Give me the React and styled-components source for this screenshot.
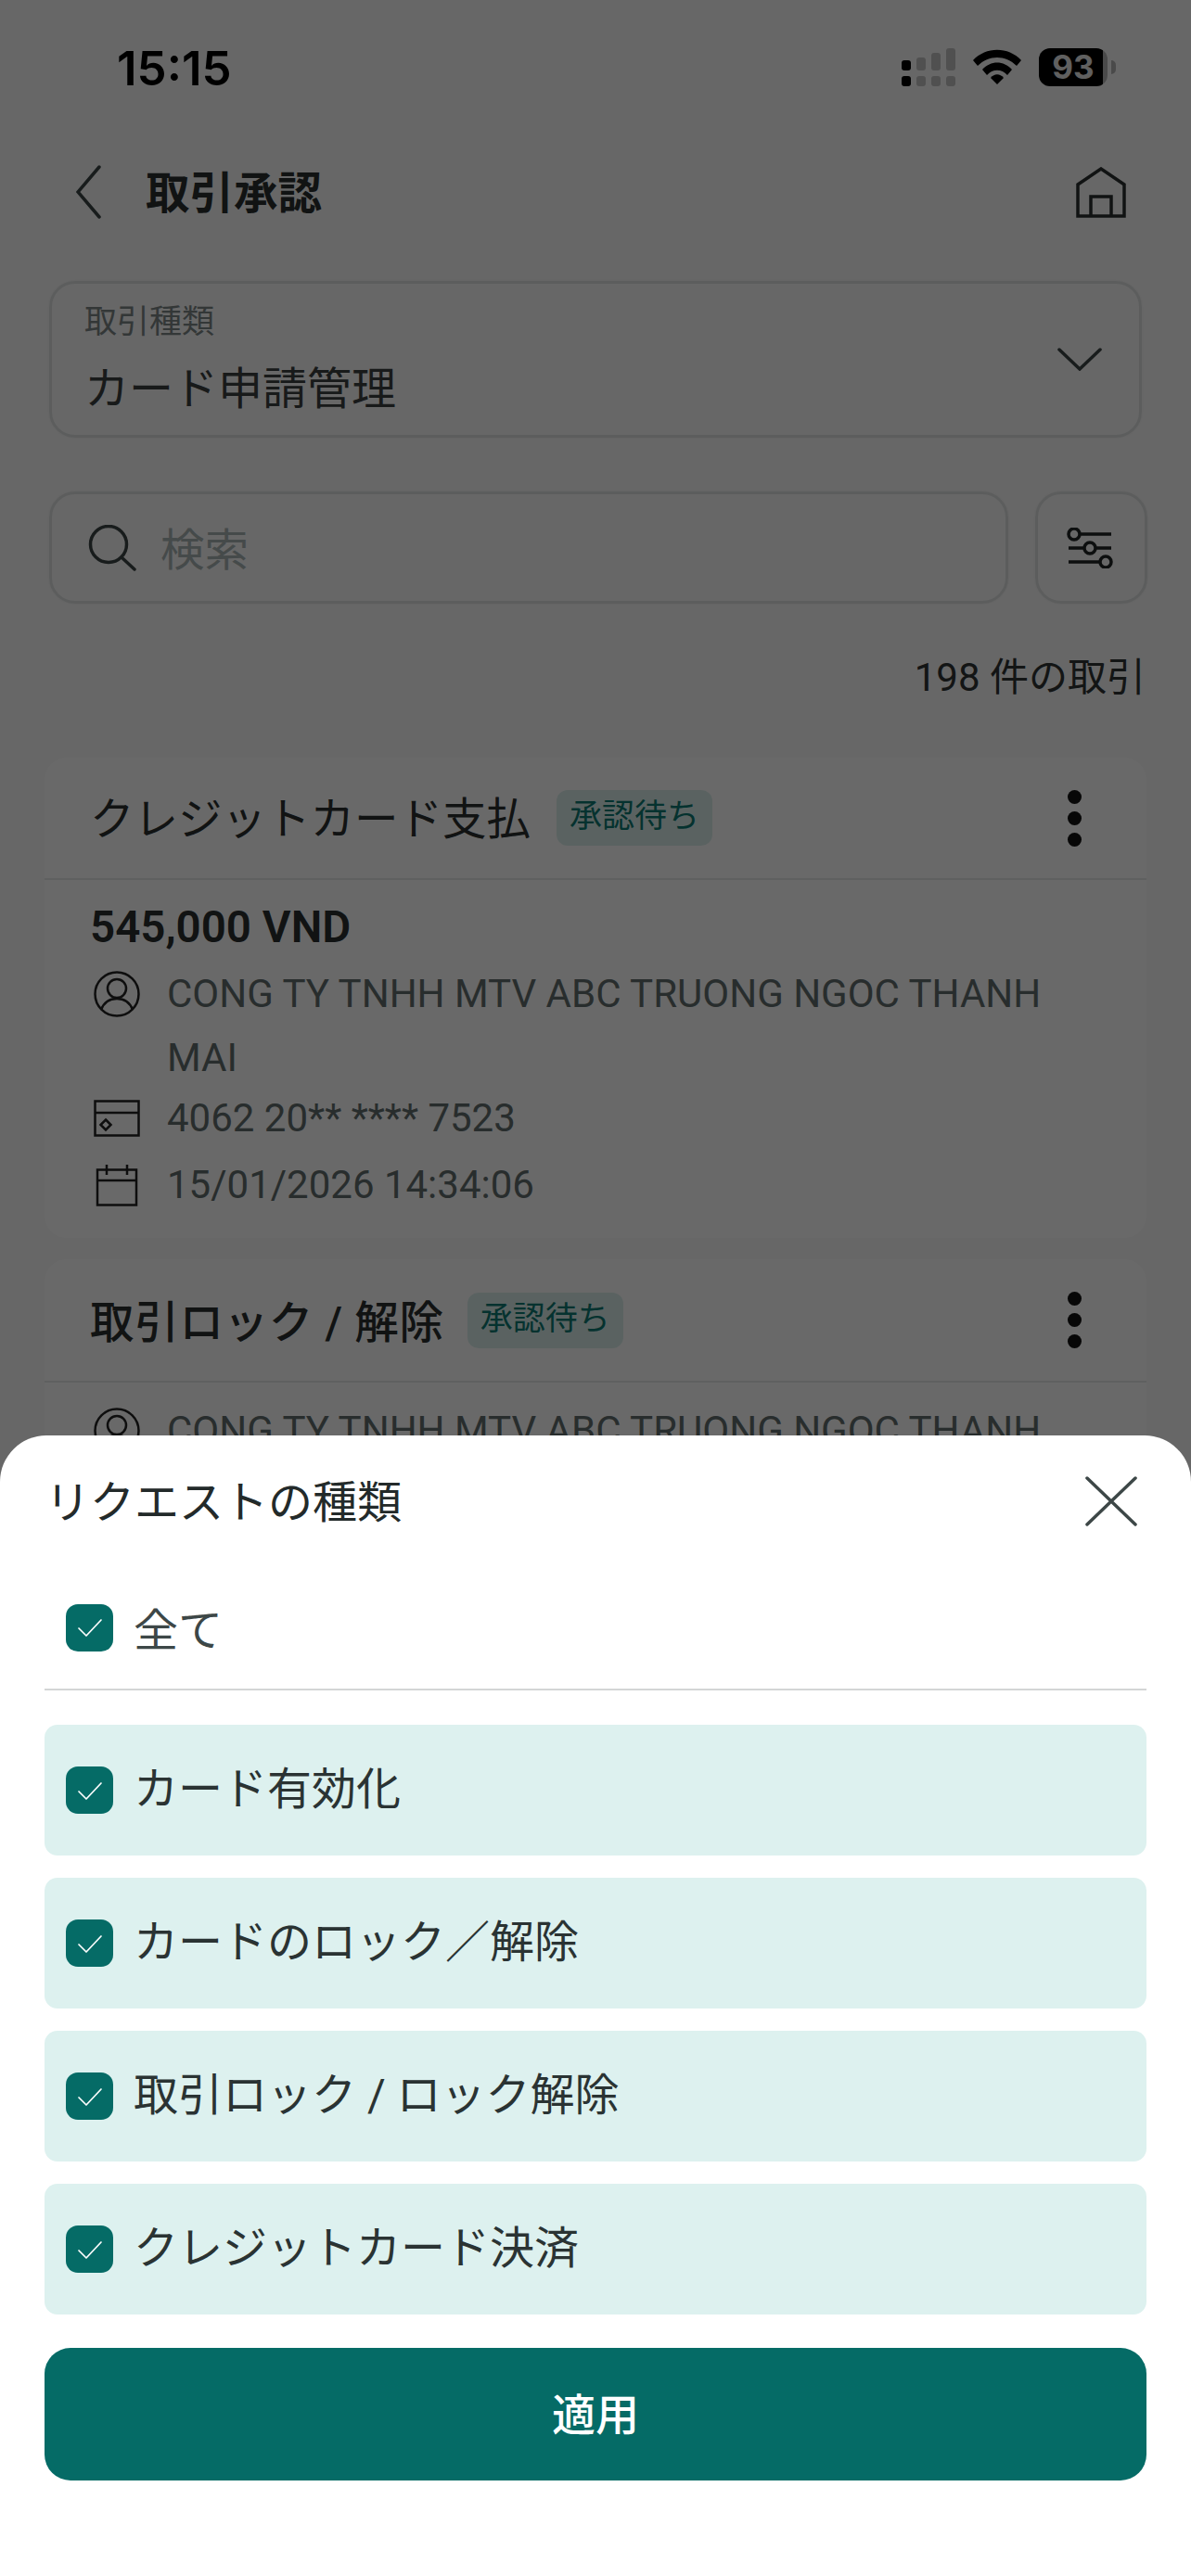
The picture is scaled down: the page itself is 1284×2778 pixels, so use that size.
import React from "react";
import styled, { createGlobalStyle } from "styled-components";

const Global = createGlobalStyle`
  html, body { margin: 0; padding: 0; background: #fff; }
  * { box-sizing: border-box; }
  body { font-family: Roboto, "Noto Sans CJK JP", sans-serif; color: #2a2f2f; }
`;

const Page = styled.div`
  position: relative;
  width: 1284px;
  height: 2778px;
  overflow: hidden;
  background: #fafafa;
`;
const StatusBar = styled.div`
  height: 144px;
  display: flex;
  align-items: center;
  justify-content: space-between;
  padding: 0 90px 0 126px;
`;
const Time = styled.div`
  font-family: Inter, sans-serif;
  font-weight: 600;
  font-size: 51px;
  padding-top: 2px;
  color: #000;
`;
const StatusIcons = styled.div`
  display: flex;
  align-items: center;
  gap: 19px;
`;
const Battery = styled.div`
  position: relative;
  width: 74px;
  height: 41px;
  border-radius: 12px;
  background: linear-gradient(to right, #000 93%, #b5b5b5 93%);
  color: #e8e8e8;
  font-family: Inter, sans-serif;
  font-weight: 700;
  font-size: 35px;
  line-height: 41px;
  text-align: center;
  &::after {
    content: "";
    position: absolute;
    right: -9px;
    top: 13px;
    width: 5px;
    height: 15px;
    border-radius: 0 6px 6px 0;
    background: #b5b5b5;
  }
`;
const Header = styled.div`
  height: 126px;
  display: flex;
  align-items: center;
  padding: 0 70px 0 82px;
`;
const Title = styled.div`
  margin-left: 48px;
  padding-bottom: 6px;
  flex: 1;
  font-size: 47.5px;
  font-weight: 700;
  color: #2a2f2f;
`;
const SelectBox = styled.div`
  margin: 33px 53px 0 53px;
  height: 169px;
  border: 3px solid #e0e3e3;
  border-radius: 28px;
  box-shadow: 0 0 3px rgba(0, 0, 0, 0.06);
  padding: 0 40px 0 35px;
  display: flex;
  align-items: center;
  justify-content: space-between;
`;
const SelectLabel = styled.div`
  font-size: 35px;
  line-height: 48px;
  color: #7d8787;
`;
const SelectValue = styled.div`
  margin-top: 16px;
  font-size: 48px;
  line-height: 64px;
  color: #3a4040;
`;
const SearchRow = styled.div`
  margin-top: 58px;
  padding: 0 47px 0 53px;
  display: flex;
  gap: 29px;
`;
const SearchBox = styled.div`
  flex: 1;
  height: 121px;
  border: 3px solid #e0e3e3;
  border-radius: 28px;
  box-shadow: 0 0 3px rgba(0, 0, 0, 0.06);
  padding-left: 39px;
  display: flex;
  align-items: center;
  gap: 26px;
`;
const Placeholder = styled.div`
  font-size: 47.5px;
  padding-bottom: 3px;
  color: #a9b3b3;
`;
const FilterButton = styled.div`
  width: 121px;
  height: 121px;
  border: 3px solid #e0e3e3;
  border-radius: 28px;
  box-shadow: 0 0 3px rgba(0, 0, 0, 0.06);
  padding-right: 3px;
  display: flex;
  align-items: center;
  justify-content: center;
`;
const Count = styled.div`
  margin-top: 50px;
  padding-right: 49px;
  height: 60px;
  line-height: 60px;
  text-align: right;
  font-size: 42px;
  color: #2e3333;
`;
const CardList = styled.div`
  margin-top: 56px;
  padding: 0 48px;
  display: flex;
  flex-direction: column;
  gap: 23px;
`;
const Card = styled.div`
  background: #fff;
  border-radius: 24px;
`;
const CardHead = styled.div`
  height: ${(p) => p.$height}px;
  border-bottom: 2px solid #e6e9e9;
  padding: 0 70px 0 49px;
  display: flex;
  align-items: center;
`;
const CardTitle = styled.div`
  font-size: 47.5px;
  padding-bottom: ${(p) => (p.$bold ? 3 : 6)}px;
  font-weight: ${(p) => (p.$bold ? 500 : 400)};
  letter-spacing: ${(p) => (p.$bold ? 0.7 : 0)}px;
  color: #2a2f2f;
`;
const Badge = styled.div`
  margin-left: ${(p) => p.$gap}px;
  width: 168px;
  height: 60px;
  border-radius: 12px;
  background: #dbefec;
  color: #0d7a72;
  font-size: 35px;
  line-height: 58px;
  text-align: center;
`;
const Dots = styled.div`
  margin-left: auto;
  display: flex;
  flex-direction: column;
  gap: 8px;
`;
const Dot = styled.span`
  width: 15px;
  height: 15px;
  border-radius: 50%;
  background: #111;
`;
const CardBody = styled.div`
  padding: ${(p) => p.$top}px 80px 26px 49px;
`;
const Amount = styled.div`
  font-size: 47.5px;
  line-height: 52px;
  font-weight: 600;
  color: #2a2f2f;
  margin-bottom: 11px;
`;
const InfoRow = styled.div`
  display: flex;
  align-items: flex-start;
  margin-top: ${(p) => p.$top || 0}px;
  line-height: ${(p) => p.$line}px;
  font-size: 42px;
  color: #626e6e;
`;
const IconSlot = styled.div`
  flex: none;
  width: 83px;
  height: ${(p) => p.$line}px;
  padding-left: 4px;
  display: flex;
  align-items: center;
`;
const Scrim = styled.div`
  position: absolute;
  inset: 0;
  background: rgba(0, 0, 0, 0.59);
`;
const Sheet = styled.div`
  position: absolute;
  left: 0;
  right: 0;
  bottom: 0;
  height: 1230px;
  background: #fff;
  border-radius: 50px 50px 0 0;
  padding: 0 48px;
`;
const SheetHead = styled.div`
  height: 141px;
  display: flex;
  align-items: center;
  justify-content: space-between;
  padding: 0 10px 0 1px;
`;
const SheetTitle = styled.div`
  font-size: 48px;
  padding-bottom: 5px;
  font-weight: 400;
  color: #232a2a;
`;
const AllRow = styled.div`
  height: 134px;
  border-bottom: 2px solid #d4d6d6;
  padding-left: 23px;
  display: flex;
  align-items: center;
  gap: 22px;
  font-size: 48px;
  color: #3d4747;
`;
const Options = styled.div`
  margin-top: 37px;
  display: flex;
  flex-direction: column;
  gap: 24px;
`;
const Option = styled.div`
  height: 141px;
  border-radius: 14px;
  background: #ddf1ef;
  padding-left: 23px;
  display: flex;
  align-items: center;
  gap: 22px;
  font-size: 48px;
  color: #2a3333;
`;
const RowText = styled.span`
  padding-bottom: ${(p) => p.$lift}px;
`;
const Check = styled.div`
  flex: none;
  width: 51px;
  height: 51px;
  border-radius: 13px;
  background: #056b66;
  display: flex;
  align-items: center;
  justify-content: center;
`;
const ApplyButton = styled.div`
  margin-top: 36px;
  height: 143px;
  border-radius: 28px;
  background: #056b66;
  color: #fff;
  font-size: 47px;
  font-weight: 500;
  padding-bottom: 6px;
  display: flex;
  align-items: center;
  justify-content: center;
`;

const SignalIcon = () => (
  <svg width="58" height="41" viewBox="0 0 58 41">
    <rect x="0" y="13" width="10" height="11" rx="3" fill="#000" />
    <rect x="0" y="30" width="10" height="11" rx="3" fill="#000" />
    <g fill="#000" opacity="0.22">
      <rect x="16" y="10" width="10" height="14" rx="3" />
      <rect x="16" y="30" width="10" height="11" rx="3" />
      <rect x="32" y="5" width="10" height="19" rx="3" />
      <rect x="32" y="30" width="10" height="11" rx="3" />
      <rect x="48" y="0" width="10" height="24" rx="3" />
      <rect x="48" y="30" width="10" height="11" rx="3" />
    </g>
  </svg>
);
const WifiIcon = () => (
  <svg width="52" height="38" viewBox="0 0 52 38">
    <path d="M0 12 C14 -3 38 -3 52 12 L47 18 C35 6 17 6 5 18 Z" fill="#000" />
    <path d="M10 22 C19 12 33 12 42 22 L37 28 C31 21 21 21 15 28 Z" fill="#000" />
    <path d="M19 31 C23 26 29 26 33 31 L26 38 Z" fill="#000" />
  </svg>
);
const BackIcon = () => (
  <svg width="27" height="58" viewBox="0 0 27 58" fill="none" stroke="#3c4646" strokeWidth="3.5" strokeLinecap="round">
    <path d="M25 2 L2 29 L25 56" />
  </svg>
);
const HomeIcon = () => (
  <svg width="54" height="55" viewBox="0 0 54 55" fill="none" stroke="#2a3030" strokeWidth="3.5">
    <path d="M2 53 V19 L27 2 L52 19 V53 Z" />
    <path d="M16 53 V32 H38 V53" />
  </svg>
);
const ChevronDown = () => (
  <svg width="48" height="25" viewBox="0 0 48 25" fill="none" stroke="#3c4646" strokeWidth="3.5" strokeLinecap="round">
    <path d="M2 2 L24 23 L46 2" />
  </svg>
);
const SearchIcon = () => (
  <svg width="52" height="50" viewBox="0 0 52 50" fill="none" stroke="#3c4646" strokeWidth="3.5" strokeLinecap="round">
    <circle cx="22" cy="21" r="19.5" />
    <path d="M36 35 L50 48" />
  </svg>
);
const FilterIcon = () => (
  <svg width="50" height="44" viewBox="0 0 50 44" fill="none" stroke="#202525" strokeWidth="3.5">
    <path d="M13 7 H48 M2 22 H19 M31 22 H48 M2 37 H36" />
    <circle cx="8" cy="7" r="6" />
    <circle cx="25" cy="22" r="6" />
    <circle cx="42" cy="37" r="6" />
  </svg>
);
const PersonIcon = () => (
  <svg width="50" height="50" viewBox="0 0 50 50" fill="none" stroke="#222" strokeWidth="2.5">
    <circle cx="25" cy="25" r="23.5" />
    <circle cx="25" cy="19" r="10" />
    <path d="M8 42 C11 34 17 30 25 30 C33 30 39 34 42 42" />
  </svg>
);
const CardIcon = () => (
  <svg width="50" height="40" viewBox="0 0 50 40" fill="none" stroke="#222" strokeWidth="2.5">
    <rect x="1.5" y="1.5" width="47" height="37" />
    <path d="M1.5 14 H48.5" />
    <path d="M13 21.5 L18.5 27 L13 32.5 L7.5 27 Z" />
  </svg>
);
const CalendarIcon = () => (
  <svg width="50" height="46" viewBox="0 0 50 46" fill="none" stroke="#222" strokeWidth="2.5">
    <rect x="4" y="6.5" width="42" height="38" />
    <path d="M4 18 H46 M14 1 V12 M36 1 V12" />
  </svg>
);
const CloseIcon = () => (
  <svg width="56" height="54" viewBox="0 0 56 54" fill="none" stroke="#3d4747" strokeWidth="3.5" strokeLinecap="round">
    <path d="M2 2 L54 52 M54 2 L2 52" />
  </svg>
);
const CheckBox = () => (
  <Check>
    <svg width="28" height="22" viewBox="0 0 28 22" fill="none" stroke="#fff" strokeWidth="1.7" strokeLinecap="round" strokeLinejoin="round">
      <path d="M2 12 L10 20 L26 3" />
    </svg>
  </Check>
);

const options = ["カード有効化", "カードのロック／解除", "取引ロック / ロック解除", "クレジットカード決済"];

export default function App() {
  return (
    <Page>
      <Global />
      <StatusBar>
        <Time>15:15</Time>
        <StatusIcons>
          <SignalIcon />
          <WifiIcon />
          <Battery>93</Battery>
        </StatusIcons>
      </StatusBar>
      <Header>
        <BackIcon />
        <Title>取引承認</Title>
        <HomeIcon />
      </Header>
      <SelectBox>
        <div>
          <SelectLabel>取引種類</SelectLabel>
          <SelectValue>カード申請管理</SelectValue>
        </div>
        <ChevronDown />
      </SelectBox>
      <SearchRow>
        <SearchBox>
          <SearchIcon />
          <Placeholder>検索</Placeholder>
        </SearchBox>
        <FilterButton>
          <FilterIcon />
        </FilterButton>
      </SearchRow>
      <Count>198 件の取引</Count>
      <CardList>
        <Card>
          <CardHead $height={132}>
            <CardTitle>クレジットカード支払</CardTitle>
            <Badge $gap={28}>承認待ち</Badge>
            <Dots>
              <Dot />
              <Dot />
              <Dot />
            </Dots>
          </CardHead>
          <CardBody $top={25}>
            <Amount>545,000 VND</Amount>
            <InfoRow $line={69}>
              <IconSlot $line={69}>
                <PersonIcon />
              </IconSlot>
              <div>CONG TY TNHH MTV ABC TRUONG NGOC THANH MAI</div>
            </InfoRow>
            <InfoRow $line={62}>
              <IconSlot $line={62}>
                <CardIcon />
              </IconSlot>
              <div>4062 20** **** 7523</div>
            </InfoRow>
            <InfoRow $line={62} $top={10}>
              <IconSlot $line={62}>
                <CalendarIcon />
              </IconSlot>
              <div>15/01/2026 14:34:06</div>
            </InfoRow>
          </CardBody>
        </Card>
        <Card>
          <CardHead $height={133}>
            <CardTitle $bold>取引ロック / 解除</CardTitle>
            <Badge $gap={25}>承認待ち</Badge>
            <Dots>
              <Dot />
              <Dot />
              <Dot />
            </Dots>
          </CardHead>
          <CardBody $top={17}>
            <InfoRow $line={69}>
              <IconSlot $line={69}>
                <PersonIcon />
              </IconSlot>
              <div>CONG TY TNHH MTV ABC TRUONG NGOC THANH MAI</div>
            </InfoRow>
          </CardBody>
        </Card>
      </CardList>
      <Scrim />
      <Sheet>
        <SheetHead>
          <SheetTitle>リクエストの種類</SheetTitle>
          <CloseIcon />
        </SheetHead>
        <AllRow>
          <CheckBox />
          <RowText $lift={2}>全て</RowText>
        </AllRow>
        <Options>
          {options.map((o) => (
            <Option key={o}>
              <CheckBox />
              <RowText $lift={12}>{o}</RowText>
            </Option>
          ))}
        </Options>
        <ApplyButton>適用</ApplyButton>
      </Sheet>
    </Page>
  );
}
